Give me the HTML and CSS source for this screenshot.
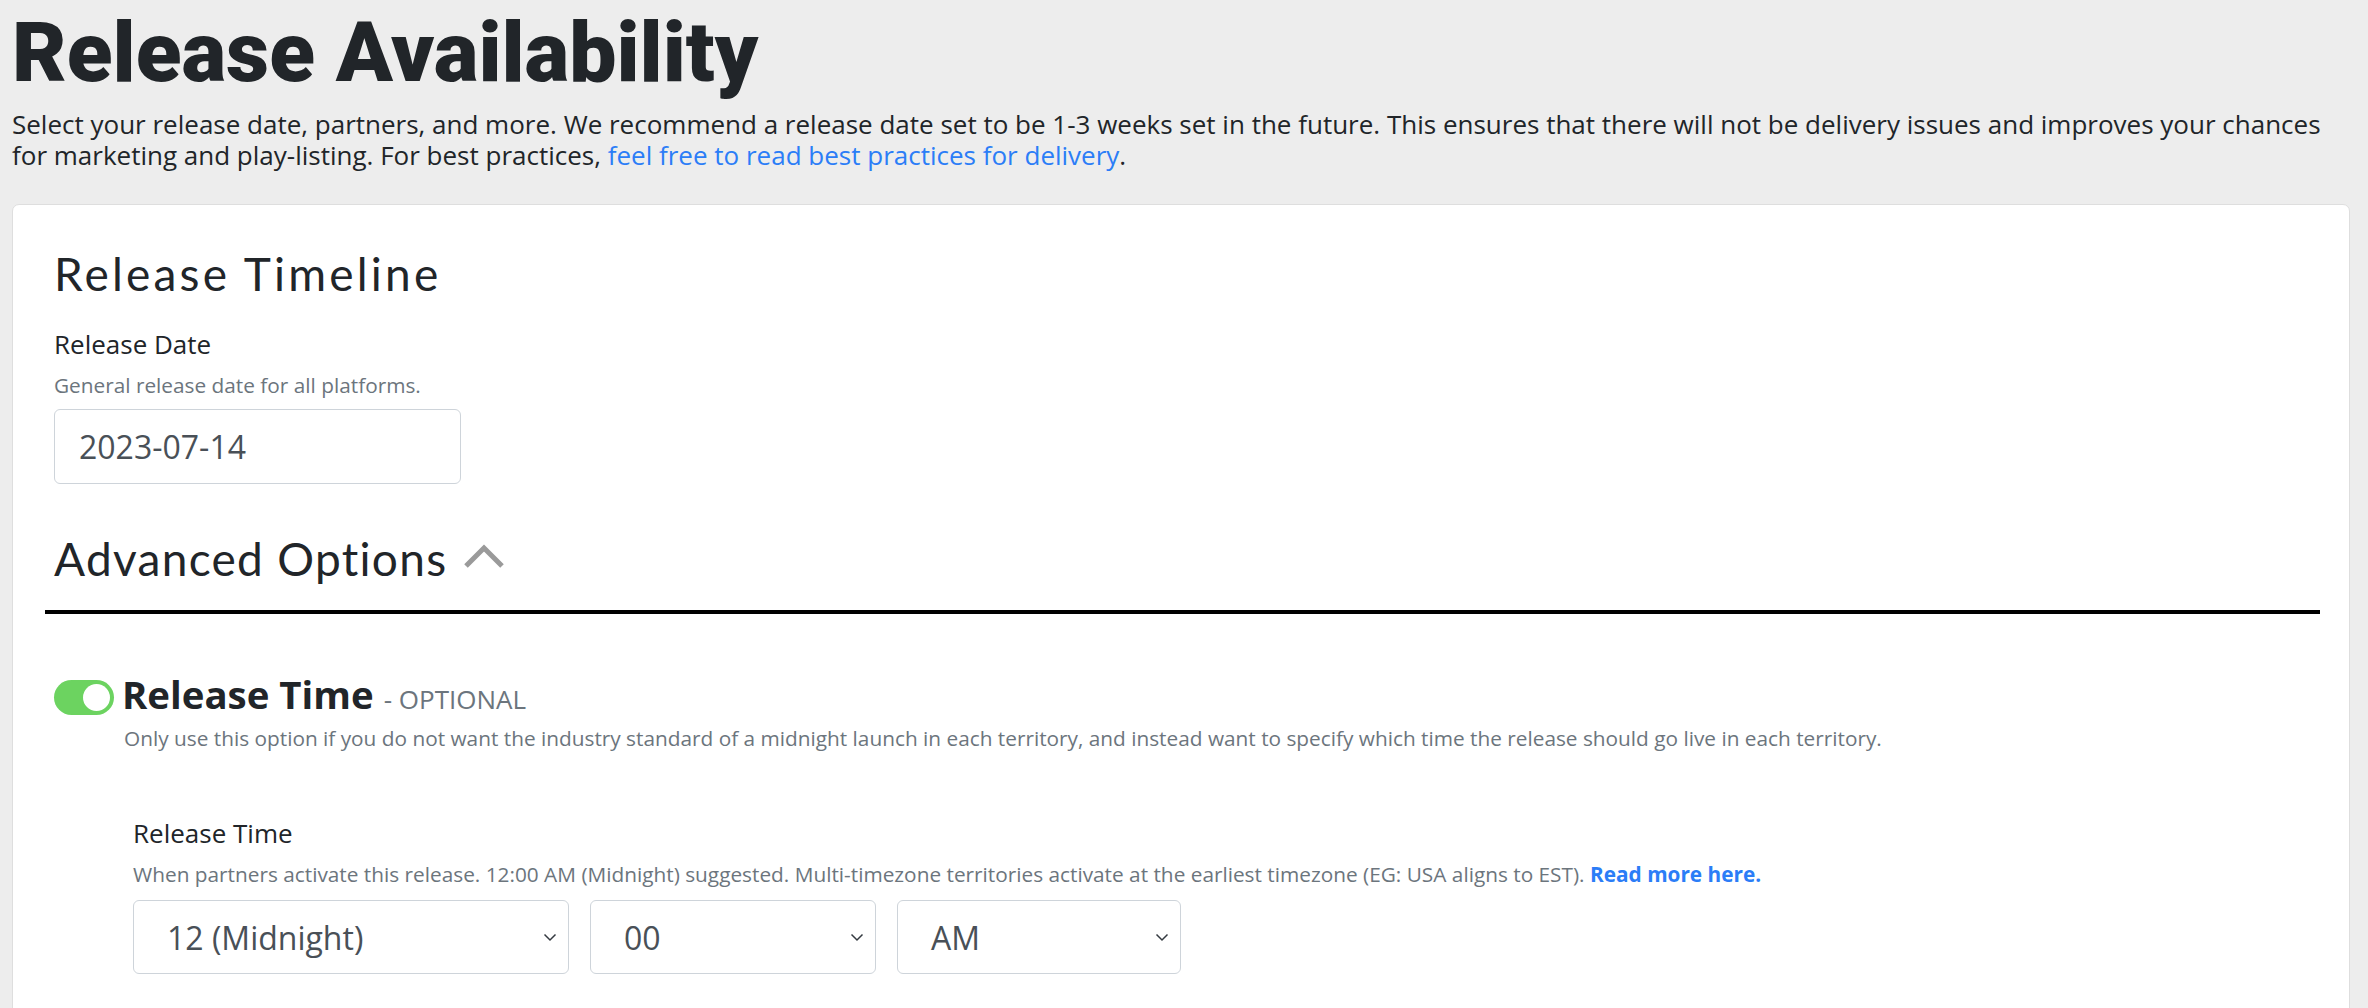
FILE: index.html
```html
<!DOCTYPE html>
<html lang="en">
<head>
<meta charset="utf-8">
<title>Release Availability</title>
<link rel="stylesheet" href="styles.css">
</head>
<body>
<div class="page">
  <h1 class="title">Release Availability</h1>
  <p class="intro">Select your release date, partners, and more. We recommend a release date set to be 1-3 weeks set in the future. This ensures that there will not be delivery issues and improves your chances for marketing and play-listing. For best practices, <a class="link" href="#">feel free to read best practices for delivery</a>.</p>

  <section class="card">
    <h2 class="section-title timeline-title">Release Timeline</h2>
    <div class="field">
      <div class="label">Release Date</div>
      <div class="help">General release date for all platforms.</div>
      <input class="date-input" type="text" value="2023-07-14">
    </div>

    <div class="adv-header">
      <h2 class="section-title adv-title">Advanced Options</h2>
      <svg class="adv-chevron" width="42" height="26" viewBox="0 0 42 26" aria-hidden="true">
        <polyline points="3,23 21,5 39,23" fill="none" stroke="#9a9a9a" stroke-width="5"/>
      </svg>
    </div>
    <hr class="divider">

    <div class="option">
      <div class="option-head">
        <span class="toggle"><span class="knob"></span></span>
        <h3 class="option-title">Release Time <span class="optional">- OPTIONAL</span></h3>
      </div>
      <p class="option-desc">Only use this option if you do not want the industry standard of a midnight launch in each territory, and instead want to specify which time the release should go live in each territory.</p>

      <div class="subfield">
        <div class="label">Release Time</div>
        <div class="help">When partners activate this release. 12:00 AM (Midnight) suggested. Multi-timezone territories activate at the earliest timezone (EG: USA aligns to EST). <a class="strong-link" href="#">Read more here.</a></div>
        <div class="selects">
          <div class="select select-hour"><span>12 (Midnight)</span>
            <svg class="caret" width="14" height="9" viewBox="0 0 14 9" aria-hidden="true"><polyline points="1.5,1.5 7,7 12.5,1.5" fill="none" stroke="#343a40" stroke-width="1.5"/></svg>
          </div>
          <div class="select select-min"><span>00</span>
            <svg class="caret" width="14" height="9" viewBox="0 0 14 9" aria-hidden="true"><polyline points="1.5,1.5 7,7 12.5,1.5" fill="none" stroke="#343a40" stroke-width="1.5"/></svg>
          </div>
          <div class="select select-ampm"><span>AM</span>
            <svg class="caret" width="14" height="9" viewBox="0 0 14 9" aria-hidden="true"><polyline points="1.5,1.5 7,7 12.5,1.5" fill="none" stroke="#343a40" stroke-width="1.5"/></svg>
          </div>
        </div>
      </div>
    </div>
  </section>
</div>
</body>
</html>
```

FILE: styles.css
```css
html, body {
  margin: 0;
  padding: 0;
}

body {
  background: #ededed;
  font-family: "Open Sans", "Liberation Sans", sans-serif;
  color: #212529;
}

.page {
  padding: 4px 18px 0 12px;
}

.title {
  margin: 0;
  font-family: Roboto, "Liberation Sans", sans-serif;
  font-weight: 900;
  font-size: 84px;
  line-height: 98px;
  letter-spacing: 0;
  color: #212529;
}

.intro {
  margin: 7px 8px 0 0;
  font-size: 26px;
  line-height: 31px;
  color: #212529;
}

.link {
  color: #2b7df7;
  text-decoration: none;
}

.card {
  margin-top: 33px;
  background: #ffffff;
  border: 1px solid #dedede;
  border-radius: 7px;
  padding: 41px 41px 80px 41px;
}

.section-title {
  margin: 0;
  font-family: Lato, "Open Sans", sans-serif;
  font-weight: 400;
  font-size: 46px;
  line-height: 55px;
  color: #212529;
}

.timeline-title {
  letter-spacing: 3.2px;
}

.adv-title {
  letter-spacing: 1.3px;
}

.field {
  margin-top: 27px;
}

.label {
  font-size: 26px;
  line-height: 33px;
  color: #212529;
}

.help {
  margin-top: 11px;
  font-size: 20.8px;
  line-height: 27px;
  color: #6c757d;
}

.date-input {
  display: block;
  box-sizing: border-box;
  margin-top: 10px;
  width: 407px;
  height: 75px;
  padding: 0 24px;
  border: 1.5px solid #ced4da;
  border-radius: 6px;
  background: #fff;
  font-family: "Open Sans", sans-serif;
  font-size: 32px;
  color: #495057;
  outline: none;
}

.adv-header {
  margin-top: 47px;
  display: flex;
  align-items: center;
  gap: 16px;
}

.adv-chevron {
  display: block;
  margin-top: -6px;
}

.divider {
  margin: 24px -12px 0 -9px;
  border: 0;
  height: 4px;
  background: #000;
}

.option {
  margin-top: 55px;
}

.option-head {
  display: flex;
  align-items: center;
  gap: 8px;
}

.toggle {
  position: relative;
  flex: none;
  width: 60px;
  height: 35px;
  border-radius: 18px;
  background: #6cd360;
}

.knob {
  position: absolute;
  top: 4px;
  right: 4px;
  width: 27px;
  height: 27px;
  border-radius: 50%;
  background: #fff;
}

.option-title {
  margin: 0;
  font-weight: 700;
  font-size: 38.4px;
  line-height: 51px;
  color: #212529;
}

.optional {
  font-weight: 400;
  font-size: 26px;
  color: #6c757d;
}

.option-desc {
  margin: 0 0 0 70px;
  font-size: 20.8px;
  line-height: 27px;
  color: #6c757d;
}

.subfield {
  margin-top: 65px;
  padding-left: 79px;
}

.strong-link {
  color: #2b7df7;
  font-weight: 700;
  text-decoration: none;
}

.selects {
  margin-top: 12px;
  display: flex;
  gap: 21px;
}

.select {
  box-sizing: border-box;
  height: 74px;
  display: flex;
  align-items: center;
  justify-content: space-between;
  padding: 0 11px 0 33px;
  border: 1.5px solid #ced4da;
  border-radius: 6px;
  background: #fff;
  font-size: 32px;
  color: #495057;
}

.select-hour { width: 436px; }
.select-min { width: 286px; }
.select-ampm { width: 284px; }

.caret {
  display: block;
  flex: none;
}
```
